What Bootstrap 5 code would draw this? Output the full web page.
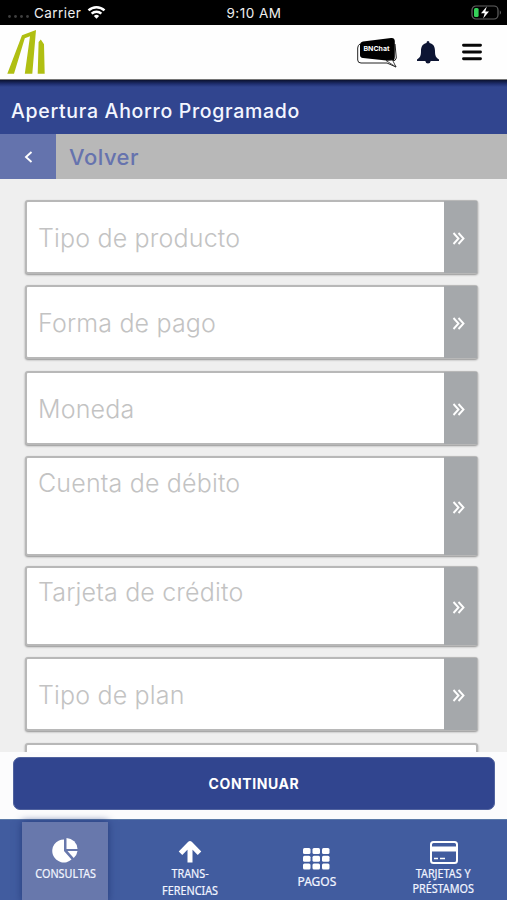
<!DOCTYPE html>
<html lang="es">
<head>
<meta charset="utf-8">
<meta name="viewport" content="width=device-width, initial-scale=1">
<title>Apertura Ahorro Programado</title>
<link href="https://cdn.jsdelivr.net/npm/bootstrap@5.3.0/dist/css/bootstrap.min.css" rel="stylesheet">
<style>
body{height:900px;background:#efefef;font-family:Inter,"Liberation Sans",sans-serif;overflow:hidden}
svg{display:block;flex:none}
.status,.brandbar,.titlebar,.backbar,.action,.tabs{flex:none}
.status{height:25px;background:#000;color:#eee;font-size:13.5px;line-height:26px}
.dots{width:21px;height:3px;margin:8px 5px 0 8px}
.clock{left:254px}
.brandbar{height:55px;background:#fefefe;border-bottom:1px solid #777}
.bell{margin-left:18px}
.burger{margin:0 25px 0 23px}
.titlebar{height:54px;background:linear-gradient(#0b1230 0,#1f2f70 4px,#31458f 7px);color:#f4f6ff;font-size:19.5px;letter-spacing:.7px;font-weight:500;line-height:62px;padding-left:11px}
.backbar{height:45px;background:#b8b8b8;color:#6673ae;font-size:22px;letter-spacing:.5px;font-weight:500;line-height:46px}
.backbtn{width:56px;background:#6473ad;margin-right:13px}
.fields{flex:1 1 0;padding:20.500px 29px 0 25px;overflow:hidden;min-height:0}
.field{height:74px;flex:none;margin-bottom:11.500px;border:2px solid #b8b8b8;border-radius:3px;background:#fff;box-shadow:0 1px 2px #909090;color:#c3c3c3;font-size:25px;letter-spacing:.17px;font-weight:300;line-height:1;padding-left:11px}
.field .go{width:33px;margin:-1px -1px -1px 0;padding:3px 4px 0 0;background:#a5a8ab}
.field .caption{white-space:nowrap;padding-top:3px}
.field.tall{height:100px;margin-bottom:10px}
.field.mid{height:80px;margin-bottom:11px}
.tall .caption,.mid .caption{align-self:flex-start;padding-top:13px}
.mid .caption{padding-top:12px}
.action{height:67px;background:#fcfcfd;padding:5px 12px 9px 13px}
.btn-go{background:#31458f;color:#fff;font-weight:700;font-size:14px;letter-spacing:.6px;border-radius:7px;border:1px solid #51639f}
.btn-go:hover{background:#2a3c80;color:#fff}
.tabs{height:81px;background:#415c9f;border-top:1px solid #5b7aa8;color:#f2f5ff;font-family:"Noto Sans","Open Sans",sans-serif;font-size:12px;line-height:17px;text-align:center}
.tabs .cell{height:80px}
.on{width:86px;margin:2px 0 0 21.500px;background:#6878ac;box-shadow:0 0 8px #263c7c}
.tabs span{white-space:nowrap;transform:scaleX(.9);-webkit-text-stroke:.2px}
.tabs .cards{line-height:14.500px}
</style>
</head>
<body class="d-flex flex-column">
<div class="status d-flex position-relative">
  <svg class="dots align-self-center" viewBox="0 0 21 3" fill="#3f3f3f"><circle cx="1.5" cy="1.5" r="1.4"/><circle cx="7.5" cy="1.5" r="1.4"/><circle cx="13.5" cy="1.5" r="1.4"/><circle cx="19.5" cy="1.5" r="1.4"/></svg>
  <span style="letter-spacing:.45px">Carrier</span>
  <svg class="align-self-center" style="margin-left:6px" width="19" height="15" viewBox="0 0 20 15" fill="none" stroke="#fff" stroke-width="2.6"><path d="M1.6 5.3a12 12 0 0 1 16.8 0M4.9 8.8a7.3 7.3 0 0 1 10.2 0"/><path d="M10 14.2L7.2 11.2a4 4 0 0 1 5.6 0z" fill="#fff" stroke="none"/></svg>
  <span class="clock position-absolute translate-middle-x text-nowrap" style="letter-spacing:.5px">9:10 AM</span>
  <svg class="ms-auto align-self-center me-1" width="32" height="15" viewBox="0 0 32 15"><rect x="1" y="1" width="26" height="13" rx="4" fill="none" stroke="#626262" stroke-width="1.2"/><rect x="3" y="3" width="4.6" height="9" rx="1.5" fill="#35d159"/><path d="M15.8 1.5L10 8.2h3.7L12.2 13.5 18 6.5h-3.7z" fill="#fff"/><path d="M28.8 5.2v4.6q2-2.3 0-4.6z" fill="#777"/></svg>
</div>
<header class="brandbar d-flex align-items-center">
  <svg width="46" height="54" viewBox="0 0 46 54" fill="#b0bf12"><path d="M7.3 48.8L22 10.2 36 5 32.3 48.8H24.8L30 11.2 24.8 13.3 14 48.8zM38.6 17l2.2-2.5 3.2 4.8.7 29.5h-7z"/></svg>
  <svg class="ms-auto" width="44" height="34" viewBox="0 0 44 34"><path d="M5 9Q2.8 10 2.7 13V25Q2.8 28 6 28H32L41 32 37 26Q41 26 41.300 23L40 9" fill="#fff" stroke="#222"/><path d="M8 6.5L36 3Q39.5 2.5 39.800 6V22Q39.800 26.3 36 26L8 23Q5 22.5 5 20V10Q5 7 8 6.5z" fill="#000"/><path d="M31 25.500L41 32 37.500 25z" fill="#fff" stroke="#222" stroke-width=".8"/><text x="21.500" y="16.300" text-anchor="middle" fill="#fff" font-size="6.800" font-weight="700" textLength="26" lengthAdjust="spacingAndGlyphs">BNChat</text></svg>
  <svg class="bell" width="22" height="24" viewBox="0 0 22 24" fill="#0d1533"><path d="M9.500 3Q9.500 1 11 1T12.500 3C17 4 18 7.500 18 11c0 5 1 6.500 4 8.500V21H0v-1.500C3 17.500 4 16 4 11c0-3.500 1-7 5.500-8zM8.300 21h5.400q-.4 2.500-2.700 2.500T8.300 21z"/></svg>
  <svg class="burger" width="20" height="18" viewBox="0 0 20 18" stroke="#080808" stroke-width="2.900" stroke-linecap="round"><path d="M1.500 2.200h17M1.500 9h17M1.500 15.800h17"/></svg>
</header>
<div class="titlebar">Apertura Ahorro Programado</div>
<div class="backbar d-flex">
  <div class="backbtn d-flex align-items-center justify-content-center"><svg width="9" height="12" viewBox="0 0 9 12" fill="none" stroke="#fff" stroke-width="1.900"><path d="M7.500 1L2 6l5.500 5"/></svg></div>
  <span>Volver</span>
</div>
<main class="fields d-flex flex-column">
  <div class="field d-flex align-items-center"><span class="caption me-auto">Tipo de producto</span><div class="go d-flex align-self-stretch align-items-center justify-content-center"><svg width="13" height="13" viewBox="0 0 13 13" fill="none" stroke="#fff" stroke-width="1.900"><path d="M1.500 1L6.500 6.500l-5 5.500M6.500 1l5 5.500-5 5.500"/></svg></div></div>
  <div class="field d-flex align-items-center"><span class="caption me-auto">Forma de pago</span><div class="go d-flex align-self-stretch align-items-center justify-content-center"><svg width="13" height="13" viewBox="0 0 13 13" fill="none" stroke="#fff" stroke-width="1.900"><path d="M1.500 1L6.500 6.500l-5 5.500M6.500 1l5 5.500-5 5.500"/></svg></div></div>
  <div class="field d-flex align-items-center"><span class="caption me-auto">Moneda</span><div class="go d-flex align-self-stretch align-items-center justify-content-center"><svg width="13" height="13" viewBox="0 0 13 13" fill="none" stroke="#fff" stroke-width="1.900"><path d="M1.500 1L6.500 6.500l-5 5.500M6.500 1l5 5.500-5 5.500"/></svg></div></div>
  <div class="field tall d-flex align-items-center"><span class="caption me-auto">Cuenta de débito</span><div class="go d-flex align-self-stretch align-items-center justify-content-center"><svg width="13" height="13" viewBox="0 0 13 13" fill="none" stroke="#fff" stroke-width="1.900"><path d="M1.500 1L6.500 6.500l-5 5.500M6.500 1l5 5.500-5 5.500"/></svg></div></div>
  <div class="field mid d-flex align-items-center"><span class="caption me-auto">Tarjeta de crédito</span><div class="go d-flex align-self-stretch align-items-center justify-content-center"><svg width="13" height="13" viewBox="0 0 13 13" fill="none" stroke="#fff" stroke-width="1.900"><path d="M1.500 1L6.500 6.500l-5 5.500M6.500 1l5 5.500-5 5.500"/></svg></div></div>
  <div class="field d-flex align-items-center"><span class="caption me-auto">Tipo de plan</span><div class="go d-flex align-self-stretch align-items-center justify-content-center"><svg width="13" height="13" viewBox="0 0 13 13" fill="none" stroke="#fff" stroke-width="1.900"><path d="M1.500 1L6.500 6.500l-5 5.500M6.500 1l5 5.500-5 5.500"/></svg></div></div>
  <div class="field"></div>
</main>
<div class="action"><button class="btn btn-go w-100 h-100 p-0">CONTINUAR</button></div>
<nav class="tabs row g-0">
  <div class="col-3 cell"><div class="on h-100 d-flex flex-column align-items-center">
    <svg style="margin:15px 0 0 1px" width="27" height="26" viewBox="0 0 27 26" fill="#fff"><path d="M12 2.500V14l7.500 8.500A11.500 11.500 0 1 1 12 2.500z"/><path d="M14.500 1A11.500 11.500 0 0 1 25.500 12h-11z"/><path d="M15.500 14h10q-.5 4-3.800 7z"/></svg>
    <span style="margin:2px 0 0 2px">CONSULTAS</span></div></div>
  <div class="col-3 cell d-flex flex-column align-items-center">
    <svg style="margin-top:20px" width="24" height="24" viewBox="0 0 24 24" fill="none" stroke="#fff" stroke-width="5" stroke-linejoin="round"><path d="M12 22.500V5M2.500 13.200L12 3.600l9.500 9.600"/></svg>
    <span style="margin-top:1px">TRANS-<br>FERENCIAS</span></div>
  <div class="col-3 cell d-flex flex-column align-items-center">
    <svg style="margin-top:28px" width="27" height="22" viewBox="0 0 27 22" fill="#fff"><rect x="0" y="0" width="7.500" height="6" rx="1.500"/><rect x="9.500" y="0" width="7.500" height="6" rx="1.500"/><rect x="19" y="0" width="7.500" height="6" rx="1.500"/><rect x="0" y="7.700" width="7.500" height="6" rx="1.500"/><rect x="9.500" y="7.700" width="7.500" height="6" rx="1.500"/><rect x="19" y="7.700" width="7.500" height="6" rx="1.500"/><rect x="0" y="15.400" width="7.500" height="6" rx="1.500"/><rect x="9.500" y="15.400" width="7.500" height="6" rx="1.500"/><rect x="19" y="15.400" width="7.500" height="6" rx="1.500"/></svg>
    <span style="margin-top:3px;transform:none">PAGOS</span></div>
  <div class="col-3 cell d-flex flex-column align-items-center">
    <svg style="margin-top:20.500px" width="28" height="23" viewBox="0 0 28 23"><rect x="1" y="1" width="26" height="21" rx="2.500" fill="none" stroke="#fff" stroke-width="2"/><path d="M1 5.500v5h26v-5z" fill="#fff"/><path d="M4 17.500h4M10 17.500h5" stroke="#fff" stroke-width="1.500"/></svg>
    <span class="cards" style="margin-top:3.500px">TARJETAS Y<br>PRÉSTAMOS</span></div>
</nav>
<script src="https://cdn.jsdelivr.net/npm/bootstrap@5.3.0/dist/js/bootstrap.bundle.min.js"></script>
</body>
</html>
